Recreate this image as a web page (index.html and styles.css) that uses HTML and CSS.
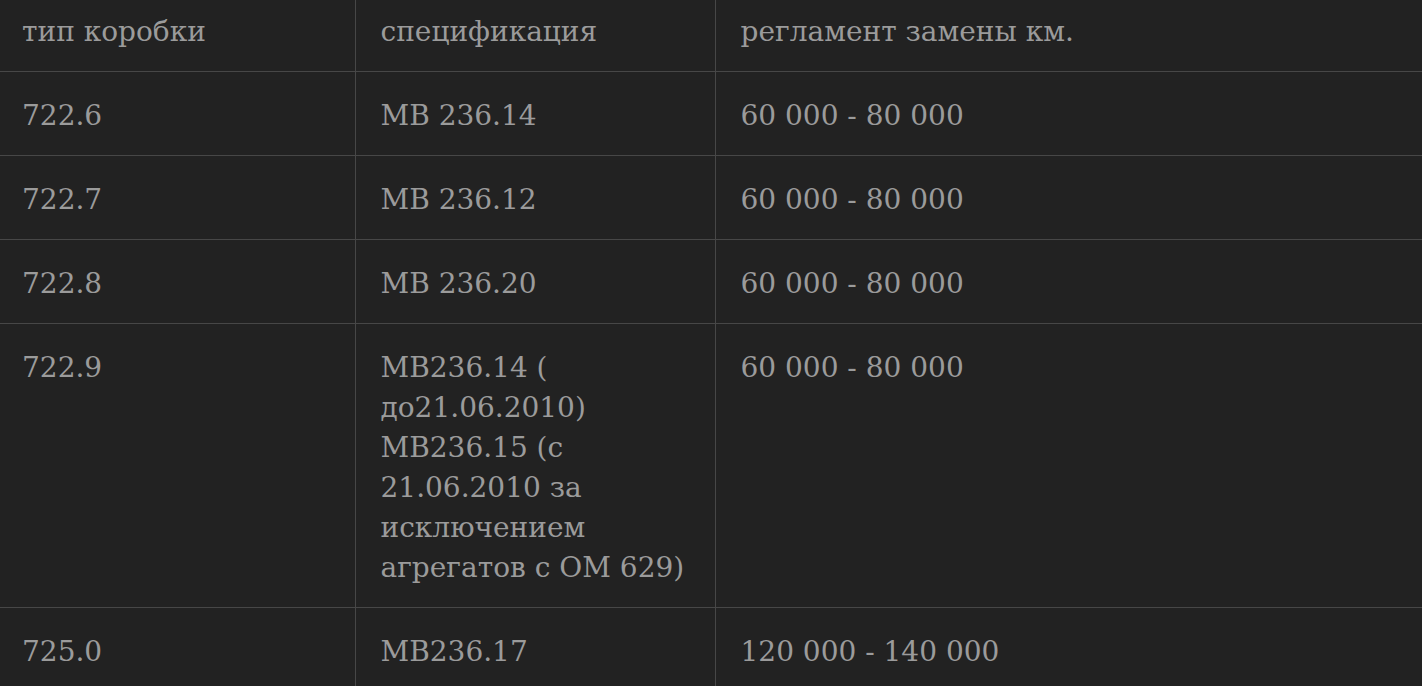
FILE: index.html
```html
<!DOCTYPE html>
<html lang="ru">
<head>
<meta charset="utf-8">
<link rel="stylesheet" href="styles.css">
</head>
<body>
<table class="spec-table">
  <thead>
    <tr>
      <th class="col-type">тип коробки</th>
      <th class="col-spec">спецификация</th>
      <th class="col-km">регламент замены км.</th>
    </tr>
  </thead>
  <tbody>
    <tr><td>722.6</td><td>MB 236.14</td><td>60 000 - 80 000</td></tr>
    <tr><td>722.7</td><td>MB 236.12</td><td>60 000 - 80 000</td></tr>
    <tr><td>722.8</td><td>MB 236.20</td><td>60 000 - 80 000</td></tr>
    <tr><td>722.9</td><td>MB236.14 ( до21.06.2010) MB236.15 (с 21.06.2010 за исключением агрегатов с ОМ 629)</td><td>60 000 - 80 000</td></tr>
    <tr><td>725.0</td><td>MB236.17</td><td>120 000 - 140 000</td></tr>
  </tbody>
</table>
</body>
</html>
```

FILE: styles.css
```css
html, body {
  margin: 0;
  padding: 0;
  background: #222222;
}

.spec-table {
  width: 1422px;
  border-collapse: collapse;
  table-layout: fixed;
  font-family: "DejaVu Serif", "Liberation Serif", serif;
  font-size: 28px;
  line-height: 40px;
  color: #9b9b9b;
}

.spec-table th,
.spec-table td {
  box-sizing: border-box;
  text-align: left;
  font-weight: normal;
  vertical-align: top;
  padding: 24px 12px 19px 25px;
  border: 1px solid #474747;
}

.spec-table th {
  padding-top: 12px;
  padding-bottom: 19px;
  border-top: none;
}

.spec-table tr > :first-child {
  border-left: none;
  padding-left: 22px;
}

.spec-table tr > :last-child {
  border-right: none;
}

.col-type { width: 355px; }
.col-spec { width: 360px; }
```
